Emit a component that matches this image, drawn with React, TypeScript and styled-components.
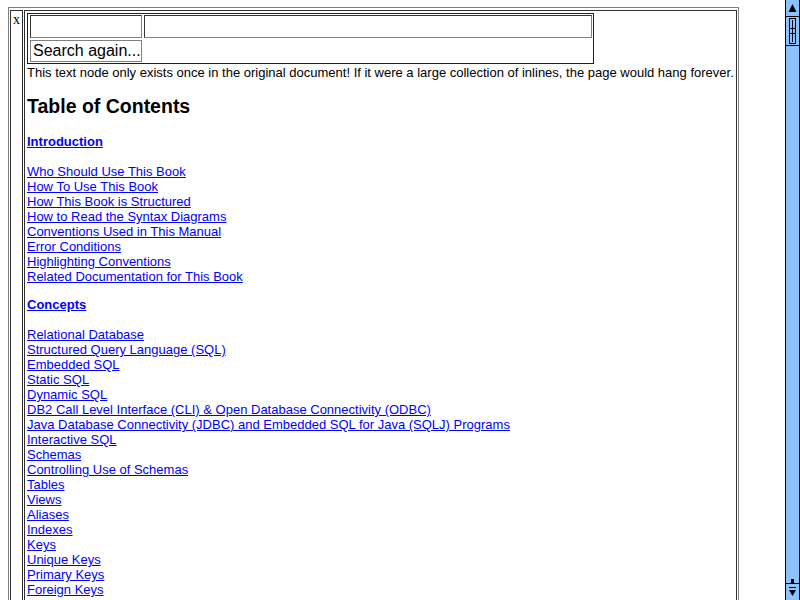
import React from 'react';
import styled, { createGlobalStyle } from 'styled-components';

const Global = createGlobalStyle`
  html, body { margin: 0; padding: 0; overflow: hidden; background: #fff; }
  body { font-family: "Liberation Sans", Arial, sans-serif; font-size: 13px; color: #000; }
`;

const Screen = styled.div`
  display: flex;
  width: 800px;
  height: 600px;
  overflow: hidden;
`;

const Page = styled.div`
  flex: 1;
  padding: 7px 0 0 8px;
  overflow: hidden;
`;

const OuterTable = styled.div`
  display: flex;
  gap: 1px;
  width: 731px;
  box-sizing: border-box;
  border: 1px solid #808080;
  padding: 2px 1px 0 1px;
`;

const CloseCell = styled.div`
  width: 11px;
  border: 1px solid #303030;
  padding-top: 1px;
  font-family: "Liberation Serif", serif;
  font-size: 14px;
  line-height: 16px;
  text-align: center;
`;

const ContentCell = styled.div`
  flex: 1;
  border: 1px solid #303030;
  padding: 2px 0 0 2px;
  font-size: 13px;
  line-height: 15px;
`;

const SearchTable = styled.div`
  display: inline-grid;
  grid-template-columns: 112px 448px;
  column-gap: 2px;
  row-gap: 2px;
  padding: 1px 1px 1px 2px;
  border: 1px solid #202020;
  vertical-align: top;
`;

const TextInput = styled.input`
  box-sizing: border-box;
  width: 100%;
  height: 23px;
  margin: 0;
  padding: 0 2px;
  border: 1px solid;
  border-color: #333 #808080 #808080 #333;
  background: #fff;
  font: 13px "Liberation Sans", Arial, sans-serif;
  outline: none;
`;

const SearchButton = styled.button`
  box-sizing: border-box;
  width: 112px;
  height: 22px;
  margin: 0;
  padding: 0 0 0 2px;
  border: 1px solid #808080;
  background: #fff;
  color: #000;
  font: 16px "Liberation Sans", Arial, sans-serif;
  line-height: 20px;
  text-align: left;
  white-space: nowrap;
  overflow: hidden;
`;

const Notice = styled.div`
  margin-top: 1px;
  white-space: nowrap;
`;

const Heading = styled.h2`
  margin: 15px 0 0 0;
  font-size: 19.5px;
  line-height: 22px;
  font-weight: bold;
`;

const Section = styled.div<{ $gap: number }>`
  margin-top: ${(p) => p.$gap}px;
`;

const SectionTitle = styled.a`
  display: block;
  font-weight: bold;
  color: #0000ff;
  text-decoration: underline;
  margin-bottom: 15px;
  width: max-content;
`;

const LinkList = styled.div`
  display: flex;
  flex-direction: column;
  align-items: flex-start;
`;

const TocLink = styled.a`
  color: #0000ff;
  text-decoration: underline;
  white-space: nowrap;
`;

const ScrollTrack = styled.div`
  width: 15px;
  height: 600px;
  box-sizing: border-box;
  background: #8ec1ff;
  border-left: 1px solid #000;
  border-right: 1px solid #000;
  display: flex;
  flex-direction: column;
`;

const ScrollButton = styled.div<{ $bottom?: boolean }>`
  height: 17px;
  box-sizing: border-box;
  ${(p) => (p.$bottom ? 'border-top: 1px solid #000;' : 'border-bottom: 1px solid #000;')}
  display: flex;
  align-items: center;
  justify-content: center;
`;

const Thumb = styled.div`
  height: 29px;
  box-sizing: border-box;
  border-bottom: 1px solid #000;
  display: flex;
  align-items: center;
  justify-content: center;
`;

const TrackSpace = styled.div`
  flex: 1;
  display: flex;
  align-items: flex-end;
  justify-content: center;
`;

const intro = [
  'Who Should Use This Book',
  'How To Use This Book',
  'How This Book is Structured',
  'How to Read the Syntax Diagrams',
  'Conventions Used in This Manual',
  'Error Conditions',
  'Highlighting Conventions',
  'Related Documentation for This Book',
];

const concepts = [
  'Relational Database',
  'Structured Query Language (SQL)',
  'Embedded SQL',
  'Static SQL',
  'Dynamic SQL',
  'DB2 Call Level Interface (CLI) & Open Database Connectivity (ODBC)',
  'Java Database Connectivity (JDBC) and Embedded SQL for Java (SQLJ) Programs',
  'Interactive SQL',
  'Schemas',
  'Controlling Use of Schemas',
  'Tables',
  'Views',
  'Aliases',
  'Indexes',
  'Keys',
  'Unique Keys',
  'Primary Keys',
  'Foreign Keys',
  'Partitioning Keys',
  'Constraints',
  'Unique Constraints',
];

const UpArrow = () => (
  <svg width="13" height="16" viewBox="0 0 13 16">
    <polygon points="2.5,12 6.5,4 10.5,12" fill="#000" />
  </svg>
);

const DownArrow = () => (
  <svg width="13" height="16" viewBox="0 0 13 16">
    <rect x="3" y="3" width="7" height="1" fill="#000" />
    <polygon points="3,6 6.5,12 10,6" fill="#000" />
  </svg>
);

const Grip = () => (
  <svg width="13" height="28" viewBox="0 0 13 28">
    <rect x="3.5" y="1.5" width="6" height="25" fill="none" stroke="#000" />
    <rect x="6" y="3" width="1" height="22" fill="#000" />
    <rect x="4" y="11" width="5" height="1" fill="#000" />
    <rect x="4" y="16" width="5" height="1" fill="#000" />
  </svg>
);

const Stem = () => (
  <svg width="13" height="4" viewBox="0 0 13 4">
    <rect x="5" y="0" width="3" height="4" fill="#000" />
  </svg>
);

export default function App() {
  return (
    <>
      <Global />
      <Screen>
        <Page>
          <OuterTable>
            <CloseCell>x</CloseCell>
            <ContentCell>
              <SearchTable>
                <TextInput type="text" />
                <TextInput type="text" />
                <SearchButton>Search again...</SearchButton>
              </SearchTable>
              <Notice>
                This text node only exists once in the original document! If it were a large collection of inlines, the page would hang forever.
              </Notice>
              <Heading>Table of Contents</Heading>
              <Section $gap={17}>
                <SectionTitle href="#">Introduction</SectionTitle>
                <LinkList>
                  {intro.map((t) => (
                    <TocLink key={t} href="#">{t}</TocLink>
                  ))}
                </LinkList>
              </Section>
              <Section $gap={13}>
                <SectionTitle href="#">Concepts</SectionTitle>
                <LinkList>
                  {concepts.map((t) => (
                    <TocLink key={t} href="#">{t}</TocLink>
                  ))}
                </LinkList>
              </Section>
            </ContentCell>
          </OuterTable>
        </Page>
        <ScrollTrack>
          <ScrollButton><UpArrow /></ScrollButton>
          <Thumb><Grip /></Thumb>
          <TrackSpace><Stem /></TrackSpace>
          <ScrollButton $bottom><DownArrow /></ScrollButton>
        </ScrollTrack>
      </Screen>
    </>
  );
}
